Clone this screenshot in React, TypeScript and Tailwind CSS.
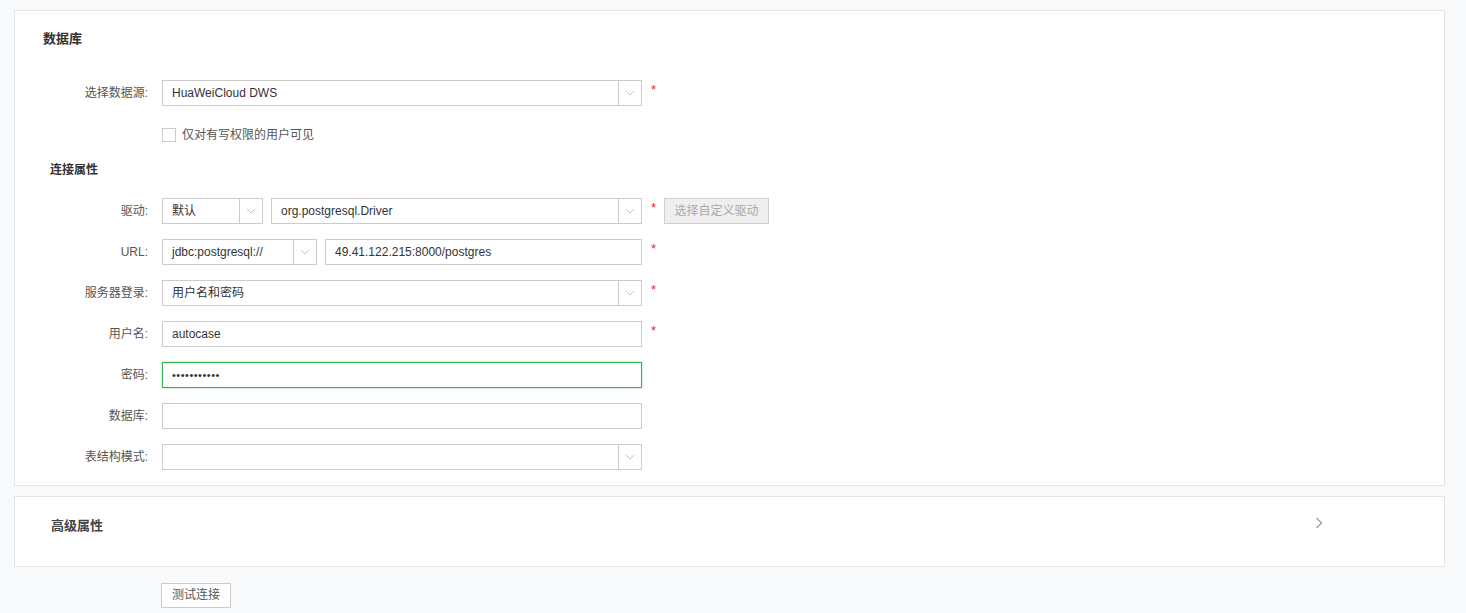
import type { ReactNode } from 'react';

const font = { fontFamily: '"Liberation Sans", "Noto Sans CJK SC", Arial, sans-serif' };

const Chevron = () => (
  <svg width="10" height="6" viewBox="0 0 10 6" fill="none">
    <path d="M1 1l4 4 4-4" stroke="#c4c4c4" strokeWidth="1" />
  </svg>
);

// text box, optionally with a dropdown arrow cell on the right
const Field = ({
  value,
  select,
  width,
  focused,
}: {
  value?: ReactNode;
  select?: boolean;
  width: string;
  focused?: boolean;
}) => (
  <div
    className={`flex h-[26px] items-stretch border bg-white ${width} ${
      focused ? 'border-[#2fb34a] shadow-[0_0_2px_rgba(47,179,74,0.5)]' : 'border-[#cccccc]'
    }`}
  >
    <div className="flex flex-1 items-center px-[9px] text-[12px] text-[#333] truncate">{value}</div>
    {select && (
      <div className="flex w-[23px] items-center justify-center border-l border-[#cccccc]">
        <Chevron />
      </div>
    )}
  </div>
);

const Star = () => <span className="ml-[9px] -mt-[8px] text-[13px] leading-none text-[#f5222d]">*</span>;

const Row = ({ label, children, className = 'mt-[15px]' }: { label: string; children: ReactNode; className?: string }) => (
  <div className={`flex items-center ${className}`}>
    <div className="w-[133px] shrink-0 text-right text-[12px] text-[#555]">{label}:</div>
    <div className="ml-[14px] flex items-center">{children}</div>
  </div>
);

export default function App() {
  return (
    <div className="min-h-[613px] bg-[#f8f9fb] pl-[14px] pr-[21px] pt-[10px]" style={font}>
      <div className="border border-[#e3e4e6] bg-white pb-[15px] pt-[19px]">
        <div className="pl-[28px] text-[13px] font-bold leading-[18px] text-[#333]">数据库</div>

        <Row label="选择数据源" className="mt-[32px]">
          <Field value="HuaWeiCloud DWS" select width="w-[480px]" />
          <Star />
        </Row>

        <div className="ml-[147px] mt-[19px] flex h-[20px] items-center">
          <span className="h-[14px] w-[14px] border border-[#cccccc] bg-white" />
          <span className="ml-[6px] text-[12px] text-[#555]">仅对有写权限的用户可见</span>
        </div>

        <div className="mt-[16px] pl-[35px] text-[12px] font-bold leading-[18px] text-[#333]">连接属性</div>

        <Row label="驱动" className="mt-[19px]">
          <Field value="默认" select width="w-[101px]" />
          <div className="ml-[8px]">
            <Field value="org.postgresql.Driver" select width="w-[371px]" />
          </div>
          <Star />
          <button className="ml-[8px] h-[26px] w-[105px] border border-[#d0d0d0] bg-[#efefef] text-[12px] text-[#aaa]">
            选择自定义驱动
          </button>
        </Row>

        <Row label="URL">
          <Field value="jdbc:postgresql://" select width="w-[155px]" />
          <div className="ml-[8px]">
            <Field value="49.41.122.215:8000/postgres" width="w-[317px]" />
          </div>
          <Star />
        </Row>

        <Row label="服务器登录">
          <Field value="用户名和密码" select width="w-[480px]" />
          <Star />
        </Row>

        <Row label="用户名">
          <Field value="autocase" width="w-[480px]" />
          <Star />
        </Row>

        <Row label="密码">
          <Field value={<span className="text-[11px] tracking-[0.5px]">•••••••••••</span>} focused width="w-[480px]" />
        </Row>

        <Row label="数据库">
          <Field width="w-[480px]" />
        </Row>

        <Row label="表结构模式">
          <Field select width="w-[480px]" />
        </Row>
      </div>

      <div className="mt-[10px] flex h-[71px] items-start border border-[#e3e4e6] bg-white pl-[36px] pr-[121px] pt-[20px]">
        <div className="flex-1 text-[13px] font-bold leading-[18px] text-[#444]">高级属性</div>
        <svg width="8" height="12" viewBox="0 0 8 12" fill="none" className="mt-0">
          <path d="M1.5 1l5 5-5 5" stroke="#999" strokeWidth="1.2" />
        </svg>
      </div>

      <div className="mt-[15px] pl-[147px]">
        <button className="h-[25px] w-[70px] border border-[#cccccc] bg-white text-[12px] text-[#555]">测试连接</button>
      </div>
    </div>
  );
}
